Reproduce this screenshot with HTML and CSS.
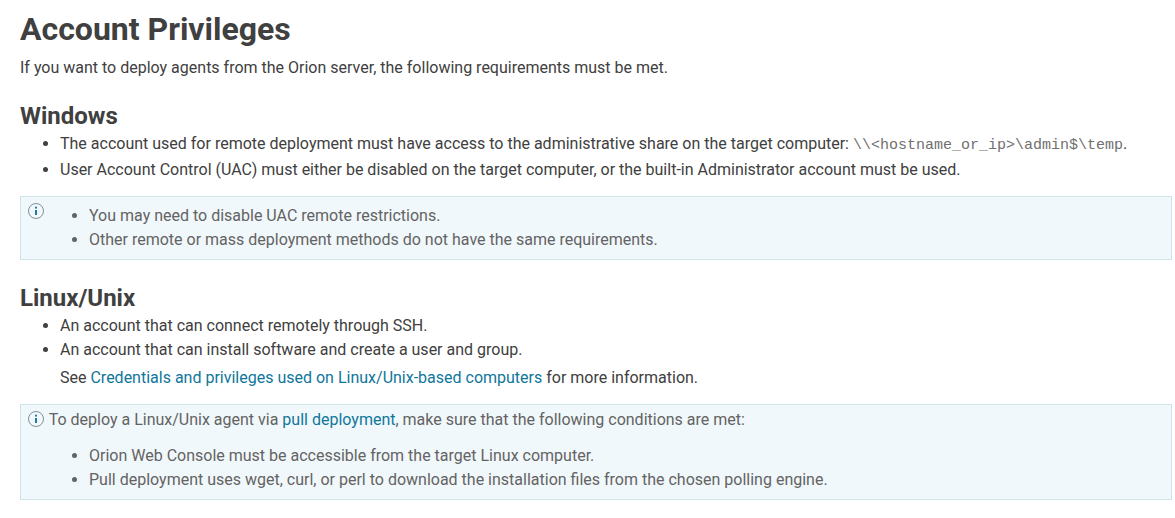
FILE: index.html
```html
<!DOCTYPE html>
<html lang="en">
<head>
<meta charset="utf-8">
<title>Account Privileges</title>
<link rel="stylesheet" href="styles.css">
</head>
<body>
<h1 class="title">Account Privileges</h1>
<p class="intro">If you want to deploy agents from the Orion server, the following requirements must be met.</p>
<h2 class="heading">Windows</h2>
<ul class="list">
<li>The account used for remote deployment must have access to the administrative share on the target computer: <code class="code">\\&lt;hostname_or_ip&gt;\admin$\temp</code>.</li>
<li>User Account Control (UAC) must either be disabled on the target computer, or the built-in Administrator account must be used.</li>
</ul>
<div class="note note-first">
<svg class="info" viewBox="0 0 16 16"><circle class="ring" cx="8" cy="8" r="7.5"/><path class="stem" d="M8 7v5"/><circle class="dot" cx="8" cy="4.7" r="1.1"/></svg>
<ul class="note-list">
<li>You may need to disable UAC remote restrictions.</li>
<li>Other remote or mass deployment methods do not have the same requirements.</li>
</ul>
</div>
<h2 class="heading heading-linux">Linux/Unix</h2>
<ul class="list">
<li>An account that can connect remotely through SSH.</li>
<li>An account that can install software and create a user and group.</li>
</ul>
<p class="see">See <a href="#">Credentials and privileges used on Linux/Unix-based computers</a> for more information.</p>
<div class="note note-second">
<p class="note-lead"><svg class="info info-inline" viewBox="0 0 16 16"><circle class="ring" cx="8" cy="8" r="7.5"/><path class="stem" d="M8 7v5"/><circle class="dot" cx="8" cy="4.7" r="1.1"/></svg> To deploy a Linux/Unix agent via <a href="#">pull deployment</a>, make sure that the following conditions are met:</p>
<ul class="note-list">
<li>Orion Web Console must be accessible from the target Linux computer.</li>
<li>Pull deployment uses wget, curl, or perl to download the installation files from the chosen polling engine.</li>
</ul>
</div>
</body>
</html>
```
FILE: styles.css
```css
html, body { margin: 0; padding: 0; background: #fff; }
body { font-family: Roboto, "Liberation Sans", sans-serif; font-size: 16px; line-height: 24px; color: #404040; padding: 8px 3px 0 20px; overflow: hidden; }
.title { margin: 0; font-size: 32px; line-height: 42px; font-weight: 700; }
.intro { margin: 6px 0 0; }
.heading { margin: 21px 0 0; font-size: 24px; line-height: 30px; font-weight: 700; }
.heading-linux { margin-top: 23px; }
.list { margin: 1px 0 0; padding: 0 0 0 40px; }
.code { font-family: "Liberation Mono", "Courier New", monospace; font-size: 15px; color: #707070; }
.note { background: #f1f8fb; border: 1px solid #cfe3ea; color: #636363; }
.note-first { display: flex; margin-top: 14px; padding: 7px 7px 6px; height: 64px; box-sizing: border-box; }
.note-first .info { margin-top: -1px; }
.note-second { margin-top: 14px; padding: 3px 7px 7px; }
.note-lead { margin: 0 0 12px; }
.info { width: 16px; height: 16px; fill: none; vertical-align: -2px; flex: none; }
.info-inline { margin-right: 1px; }
.ring { stroke: #7f9299; stroke-width: 1; }
.stem { stroke: #1b7f9c; stroke-width: 2; }
.dot { fill: #1b7f9c; stroke: none; }
.note-list { margin: 0; padding: 0 0 0 61px; }
.note-first .note-list { padding-left: 45px; }
.see { margin: 4px 0 0 40px; }
a { color: #0f769b; text-decoration: none; }
```
